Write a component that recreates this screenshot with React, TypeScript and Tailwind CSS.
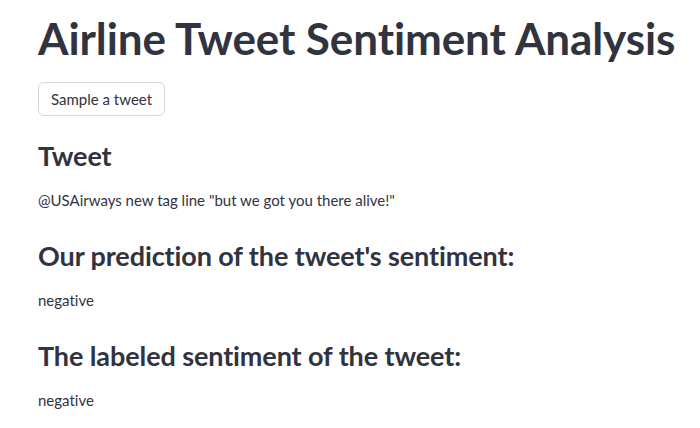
export default function App() {
  return (
    <div className="min-h-screen bg-white text-[#31333f] font-['Lato','Noto_Sans',sans-serif] [font-variant-ligatures:none]">
      <div className="px-[38px] pt-[10px]">
        <h1 className="text-[44px] font-bold leading-[56px] tracking-[-0.1px] whitespace-nowrap">
          Airline Tweet Sentiment Analysis
        </h1>
        <button className="mt-[16px] h-[34px] px-[12px] border border-[#d6d6d9] rounded-md bg-white text-[15px]">
          Sample a tweet
        </button>
        <h2 className="mt-[22px] text-[27px] font-bold leading-[36px] tracking-[-0.1px]">Tweet</h2>
        <p className="mt-[14px] text-[15px] leading-[24px]">
          @USAirways new tag line "but we got you there alive!"
        </p>
        <h2 className="mt-[26px] text-[27px] font-bold leading-[36px] tracking-[-0.1px]">
          Our prediction of the tweet's sentiment:
        </h2>
        <p className="mt-[14px] text-[15px] leading-[24px]">negative</p>
        <h2 className="mt-[26px] text-[27px] font-bold leading-[36px] tracking-[-0.1px]">
          The labeled sentiment of the tweet:
        </h2>
        <p className="mt-[14px] text-[15px] leading-[24px]">negative</p>
      </div>
    </div>
  );
}
